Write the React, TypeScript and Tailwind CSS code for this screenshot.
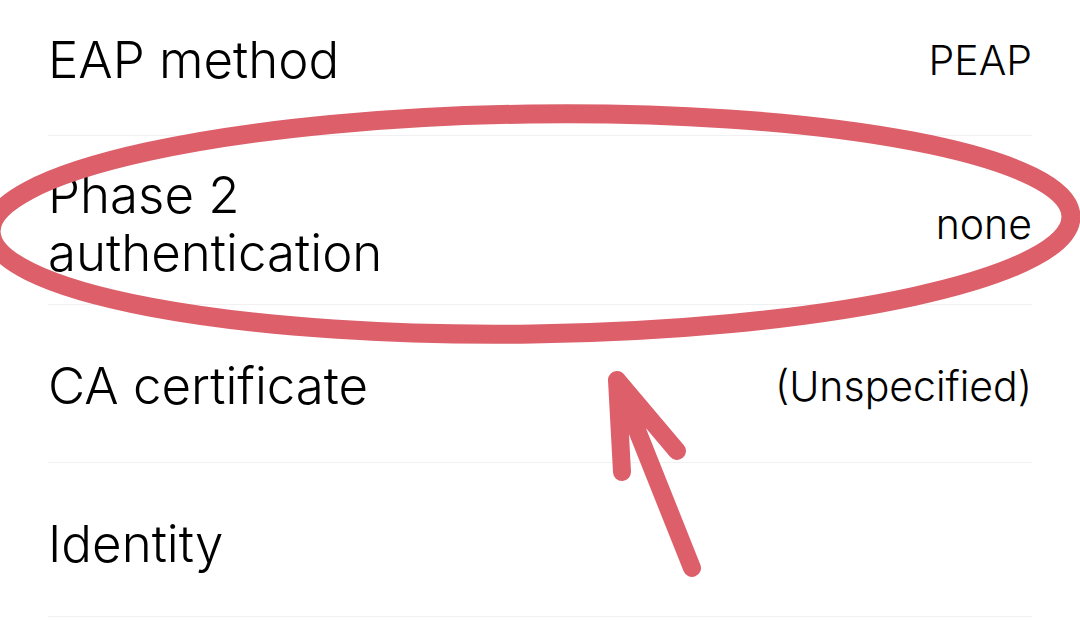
import React from 'react';

const rows = [
  { label: 'EAP method', value: 'PEAP', h: 'h-[136px] pb-4' },
  { label: 'Phase 2\nauthentication', value: 'none', h: 'h-[169px] pt-2' },
  { label: 'CA certificate', value: '(Unspecified)', h: 'h-[158px] pt-1' },
  { label: 'Identity', value: '', h: 'h-[154px] pt-2' },
];

export default function App() {
  return (
    <div className="relative w-[1080px] h-[620px] overflow-hidden bg-white font-['Inter','Noto_Sans',sans-serif] text-black">
      {/* settings list */}
      <div className="flex flex-col px-12">
        {rows.map((r, i) => (
          <div key={i} className={`flex items-center justify-between border-b border-[#f1f1f1] ${r.h}`}>
            <span className="whitespace-pre-line text-[51px] font-light leading-[58px]">{r.label}</span>
            {r.value && <span className="text-[41px] font-light leading-[50px]">{r.value}</span>}
          </div>
        ))}
      </div>

      {/* hand-drawn annotation on top */}
      <svg className="absolute inset-0 pointer-events-none" width="1080" height="620" viewBox="0 0 1080 620">
        <ellipse cx="531" cy="224" rx="540" ry="110" transform="rotate(-0.8 531 224)" fill="none" stroke="#dc5f6a" strokeWidth="19" />
        <path d="M692 568 L617 380 M622 472 L617 380 L677 451" fill="none" stroke="#dc5f6a" strokeWidth="18" strokeLinecap="round" strokeLinejoin="round" />
      </svg>
    </div>
  );
}
